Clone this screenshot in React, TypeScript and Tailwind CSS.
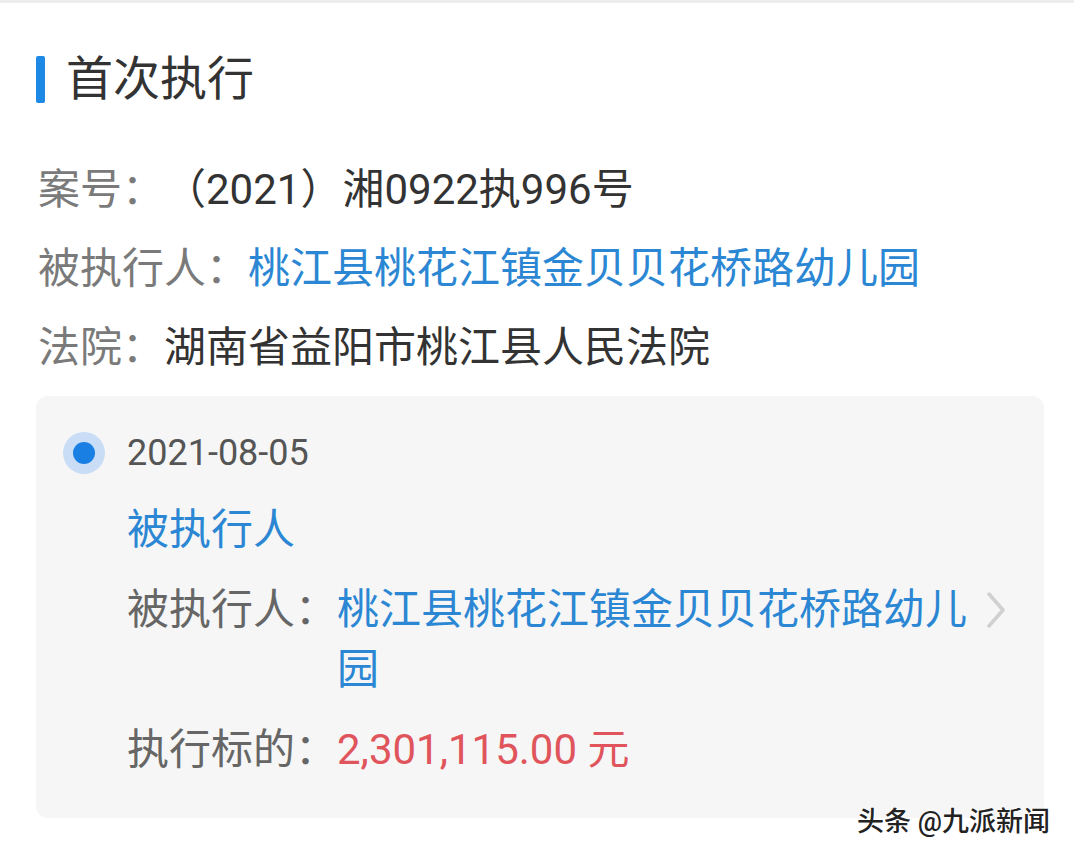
import React from "react"

const font = { fontFamily: 'Roboto, "Noto Sans CJK SC", sans-serif' }

function Row({ label, children }: { label: string; children: React.ReactNode }) {
  return (
    <div className="flex h-[79px] items-center text-[42px] leading-[79px]">
      <span className="text-[#7a7a7a]">{label}</span>
      {children}
    </div>
  )
}

export default function App() {
  return (
    <div style={font} className="relative h-[858px] w-[1074px] overflow-hidden border-t-[3px] border-[#ededed] bg-white">
      {/* title */}
      <div className="mt-[46px] flex h-[60px] items-center pl-[36px]">
        <div className="h-[47px] w-[9px] rounded-[2px] bg-[#1e88e5]" />
        <h1 className="ml-[21px] text-[47px] leading-[60px] text-[#333]">首次执行</h1>
      </div>

      {/* case info */}
      <div className="mt-[41px] px-[38px]">
        <Row label="案号：">
          <span className="text-[#333]">（2021）湘0922执996号</span>
        </Row>
        <Row label="被执行人：">
          <span className="text-[#2b87d3]">桃江县桃花江镇金贝贝花桥路幼儿园</span>
        </Row>
        <Row label="法院：">
          <span className="text-[#333]">湖南省益阳市桃江县人民法院</span>
        </Row>
      </div>

      {/* timeline card */}
      <div className="ml-[36px] mt-[9px] h-[422px] w-[1008px] rounded-[12px] bg-[#f6f6f6] pt-[32px] pl-[27px] pr-[38px]">
        <div className="flex h-[50px] items-center">
          <div className="flex h-[42px] w-[42px] items-center justify-center rounded-full bg-[#c9def6]">
            <div className="h-[22px] w-[22px] rounded-full bg-[#1a7fe3]" />
          </div>
          <span className="ml-[22px] text-[36px] leading-[50px] text-[#555]">2021-08-05</span>
        </div>

        <div className="pl-[64px]">
          <div className="mt-[27px] text-[42px] leading-[50px] text-[#2b87d3]">被执行人</div>

          <div className="mt-[25px] flex items-start text-[42px] leading-[60px]">
            <span className="shrink-0 text-[#666]">被执行人：</span>
            <span className="flex-1 text-[#2b87d3]">桃江县桃花江镇金贝贝花桥路幼儿园</span>
            <svg className="ml-[12px] mt-[12px] shrink-0" width="20" height="36" viewBox="0 0 20 36" fill="none">
              <path d="M3 2 L17 18 L3 34" stroke="#d0d0d0" strokeWidth="3.5" strokeLinecap="round" strokeLinejoin="round" />
            </svg>
          </div>

          <div className="mt-[20px] flex items-start text-[42px] leading-[60px]">
            <span className="shrink-0 text-[#666]">执行标的：</span>
            <span className="text-[#e0545c]">2,301,115.00 元</span>
          </div>
        </div>
      </div>

      {/* watermark */}
      <div
        className="absolute right-[24px] top-[801px] text-[27px] font-medium leading-[36px] text-[#222]"
        style={{ textShadow: "0 0 3px #fff, 0 0 3px #fff, 1px 1px 2px #fff" }}
      >
        头条 @九派新闻
      </div>
    </div>
  )
}
